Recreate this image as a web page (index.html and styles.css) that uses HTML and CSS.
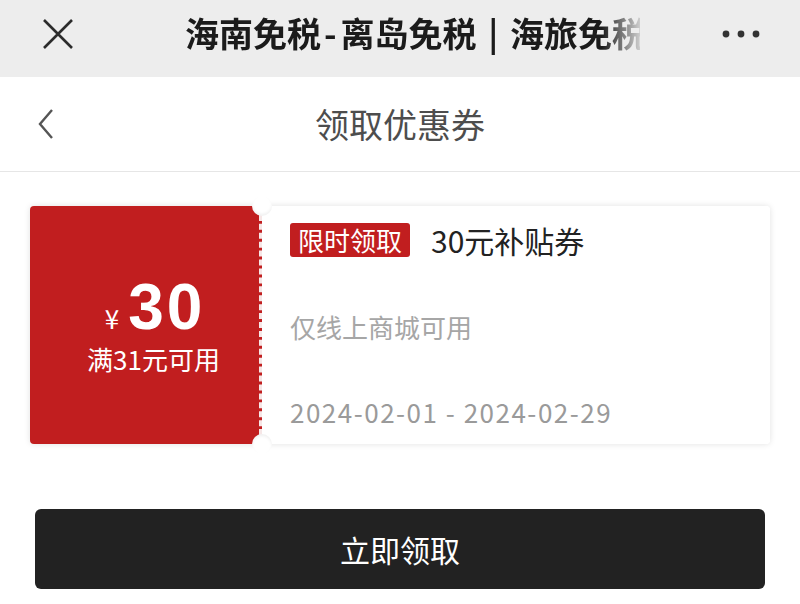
FILE: index.html
```html
<!DOCTYPE html>
<html lang="zh">
<head>
<meta charset="utf-8">
<title>领取优惠券</title>
<link rel="stylesheet" href="styles.css">
</head>
<body>
<div class="topbar">
  <svg class="close" width="32" height="32" viewBox="0 0 32 32"><path d="M2 2 L30 30 M30 2 L2 30" stroke="#2b2b2b" stroke-width="2.6" fill="none"/></svg>
  <div class="title">海南免税<span class="dash">-</span>离岛免税 <span class="bar">|</span> 海旅免税</div>
  <svg class="more" width="38" height="10" viewBox="0 0 38 10"><circle cx="4" cy="5" r="3.4" fill="#333"/><circle cx="19" cy="5" r="3.4" fill="#333"/><circle cx="34" cy="5" r="3.4" fill="#333"/></svg>
</div>
<div class="navbar">
  <div class="nav-left">
    <svg width="16" height="30" viewBox="0 0 16 30"><path d="M14 1 L2 15 L14 29" stroke="#555" stroke-width="2.4" fill="none"/></svg>
  </div>
  <div class="nav-title">领取优惠券</div>
  <div></div>
</div>
<div class="content">
  <div class="coupon">
    <div class="c-left">
      <div class="amount"><span class="yen">¥</span><span class="num">30</span></div>
      <div class="cond">满31元可用</div>
    </div>
    <div class="c-right">
      <div class="head"><span class="badge">限时领取</span><span class="name">30元补贴券</span></div>
      <div class="desc">仅线上商城可用</div>
      <div class="date">2024-02-01 - 2024-02-29</div>
    </div>
    <span class="notch top"></span>
    <span class="notch bottom"></span>
  </div>
  <button class="btn">立即领取</button>
</div>
</body>
</html>
```
FILE: styles.css
```css
* { box-sizing: border-box; }
html, body { margin: 0; padding: 0; background: #fff; }
body { font-family: "Noto Sans CJK SC", "Noto Sans", sans-serif; width: 800px; height: 604px; overflow: hidden; }

.topbar { height: 77px; background: #ededed; display: flex; align-items: center; padding-bottom: 12px; }
.close { margin-left: 42px; flex: none; margin-top: 2px; }
.title { margin-left: 111px; width: 455px; white-space: nowrap; overflow: hidden; font-size: 34px; font-weight: 700; color: #1b1b1b; line-height: 44px;
  -webkit-mask-image: linear-gradient(to right, #000 calc(100% - 38px), rgba(0,0,0,0.15));
  mask-image: linear-gradient(to right, #000 calc(100% - 38px), rgba(0,0,0,0.15)); }
.dash { margin: 0 4px 0 3px; }
.bar { margin: 0 4px; }
.more { margin-left: auto; margin-right: 40px; flex: none; margin-top: 2px; }

.navbar { height: 95px; border-bottom: 1px solid #e6e6e6; display: grid; grid-template-columns: 1fr auto 1fr; align-items: center; }
.nav-left { padding-left: 38px; display: flex; align-items: center; }
.nav-title { font-size: 34px; color: #4d4d4d; line-height: 44px; }

.content { padding: 34px 30px 0; }
.coupon { position: relative; display: flex; height: 238px; box-shadow: 0 0 6px rgba(0,0,0,0.12); border-radius: 4px; }
.c-left { width: 232px; flex: none; background: #c11e1f; border-right: 3px dashed #f6e6e6; border-radius: 4px 0 0 4px; display: flex; flex-direction: column; align-items: center; justify-content: center; padding-left: 18px; color: #fff; }
.amount { display: flex; align-items: baseline; line-height: 62px; }
.yen { font-size: 26px; margin-right: 9px; }
.num { font-family: "Liberation Sans", Arial, sans-serif; font-weight: 700; font-size: 64px; letter-spacing: 3px; margin-right: -3px; }
.cond { font-size: 26px; line-height: 32px; margin-top: -6px; }

.c-right { flex: 1; background: #fff; border-radius: 0 4px 4px 0; padding: 17px 28px 0; }
.head { display: flex; align-items: center; height: 34px; }
.badge { background: #c11e1f; color: #fff; font-size: 26px; line-height: 34px; padding: 0 8px; border-radius: 3px; }
.name { margin-left: 21px; font-size: 30px; color: #222; line-height: 34px; }
.desc { margin-top: 52px; font-size: 26px; line-height: 36px; color: #a6a6a6; }
.date { margin-top: 49px; font-size: 26px; line-height: 36px; color: #9a9a9a; letter-spacing: 1.5px; }

.notch { position: absolute; left: 222px; width: 20px; height: 20px; border-radius: 50%; background: #fff; }
.notch.top { top: -10px; box-shadow: inset 0 -2px 3px rgba(0,0,0,0.06); }
.notch.bottom { bottom: -10px; box-shadow: inset 0 2px 3px rgba(0,0,0,0.06); }

.btn { display: block; width: 730px; margin: 65px 0 0 5px; height: 80px; border: none; border-radius: 6px; background: #222; color: #fff; font-family: "Noto Sans CJK SC", sans-serif; font-size: 30px; padding: 0; }
```
